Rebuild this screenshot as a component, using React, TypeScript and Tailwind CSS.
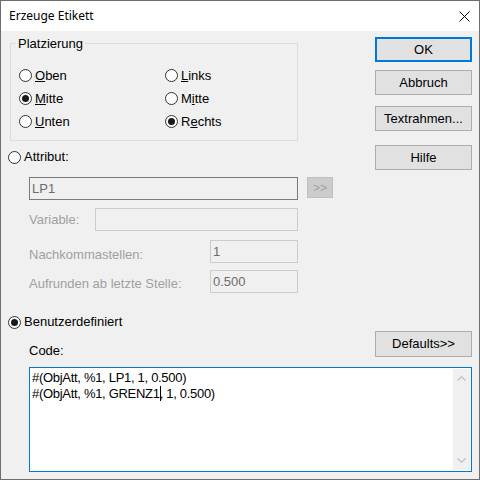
import React from "react";

function Radio({ checked }: { checked?: boolean }) {
  return (
    <span className="w-[13px] h-[13px] rounded-full border border-[#333333] bg-white flex items-center justify-center shrink-0">
      {checked && <span className="w-[7px] h-[7px] rounded-full bg-[#1a1a1a]" />}
    </span>
  );
}

function Option({ checked, children }: { checked?: boolean; children: React.ReactNode }) {
  return (
    <div className="h-[23px] flex items-center gap-[3px]">
      <Radio checked={checked} />
      <span className="leading-[16px]">{children}</span>
    </div>
  );
}

function Button({ children, focused, className = "" }: { children: React.ReactNode; focused?: boolean; className?: string }) {
  return (
    <div
      className={
        "w-[97px] h-[25px] bg-[#e1e1e1] flex items-center justify-center leading-[16px] " +
        (focused ? "border-2 border-[#0078d7] " : "border border-[#adadad] ") +
        className
      }
    >
      {children}
    </div>
  );
}

function Field({ value, className = "" }: { value?: string; className?: string }) {
  return (
    <div className={"h-[23px] bg-[#f0f0f0] border border-[#cccccc] flex items-center pl-[2px] text-[#6d6d6d] leading-[16px] " + className}>
      {value}
    </div>
  );
}

export default function App() {
  return (
    <div className="w-[480px] h-[480px] border border-[#6e6e6e] bg-[#f0f0f0] flex flex-col text-[13px] text-black font-['Liberation_Sans',Arial,sans-serif]">
      {/* title bar */}
      <div className="h-[30px] bg-white flex items-center justify-between pl-[8px] pr-[9px] shrink-0">
        <span className="text-[12px] font-['Noto_Sans',sans-serif] leading-[16px]">Erzeuge Etikett</span>
        <svg width="11" height="11" viewBox="0 0 11 11" className="shrink-0">
          <path d="M0.5 0.5 L10.5 10.5 M10.5 0.5 L0.5 10.5" stroke="#000" strokeWidth="1" />
        </svg>
      </div>

      <div className="flex-1 flex flex-col pl-[7px] pr-[7px]">
        <div className="flex justify-between">
          {/* left side */}
          <div className="w-[326px] flex flex-col">
            <div className="relative ml-[2px] mt-[12px] w-[288px] h-[98px] border border-[#dcdcdc] pt-[20px] pl-[8px]">
              <span className="absolute left-[5px] -top-[8px] px-[2px] bg-[#f0f0f0] leading-[16px]">Platzierung</span>
              <div className="grid grid-cols-[146px_1fr]">
                <Option><u>O</u>ben</Option>
                <Option><u>L</u>inks</Option>
                <Option checked><u>M</u>itte</Option>
                <Option>M<u>i</u>tte</Option>
                <Option><u>U</u>nten</Option>
                <Option checked>R<u>e</u>chts</Option>
              </div>
            </div>

            <div className="mt-[6px] h-[20px] flex items-center gap-[3px]">
              <Radio />
              <span className="leading-[16px]">Attribut:</span>
            </div>

            <div className="mt-[10px] flex items-start">
              <div className="ml-[21px] w-[269px] h-[23px] bg-[#f0f0f0] border border-[#7a7a7a] flex items-center pl-[2px] text-[#6d6d6d] leading-[16px]">
                LP1
              </div>
              <div className="ml-[9px] w-[26px] h-[21px] bg-[#cccccc] border border-[#bfbfbf] flex items-center justify-center text-[#a0a0a0] text-[12px] leading-[14px]">
                &gt;&gt;
              </div>
            </div>

            <div className="mt-[8px] w-[290px] flex items-center pl-[21px]">
              <span className="text-[#a0a0a0] leading-[16px]">Variable:</span>
              <Field className="ml-auto w-[203px]" />
            </div>

            <div className="mt-[9px] w-[290px] flex items-start pl-[21px]">
              <span className="text-[#a0a0a0] leading-[16px] pt-[7px]">Nachkommastellen:</span>
              <Field value="1" className="ml-auto w-[88px]" />
            </div>

            <div className="mt-[7px] w-[290px] flex items-start pl-[21px]">
              <span className="text-[#a0a0a0] leading-[16px] pt-[6px]">Aufrunden ab letzte Stelle:</span>
              <Field value="0.500" className="ml-auto w-[88px]" />
            </div>
          </div>

          {/* right-hand buttons */}
          <div className="flex flex-col pt-[6px]">
            <Button focused>OK</Button>
            <Button className="mt-[8px]">Abbruch</Button>
            <Button className="mt-[11px]">Textrahmen...</Button>
            <Button className="mt-[14px]">Hilfe</Button>
          </div>
        </div>

        {/* custom code section */}
        <div className="mt-[20px] h-[18px] flex items-center gap-[3px]">
          <Radio checked />
          <span className="leading-[16px]">Benutzerdefiniert</span>
        </div>

        <div className="flex justify-between items-start">
          <span className="ml-[21px] mt-[12px] leading-[16px]">Code:</span>
          <Button className="h-[26px]">Defaults&gt;&gt;</Button>
        </div>

        <div className="mt-[8px] ml-[21px] h-[105px] border border-[#0078d7] bg-white flex">
          <div className="flex-1 pl-[2px] pt-[2px] leading-[16px] whitespace-pre tracking-[-0.3px]">
            <div>#(ObjAtt, %1, LP1, 1, 0.500)</div>
            <div>
              #(ObjAtt, %1, GRENZ1<span className="inline-block w-[1px] h-[15px] bg-black align-[-3px] -mr-[1px]" />, 1, 0.500)
            </div>
          </div>
          <div className="p-[1px] flex">
            <div className="w-[17px] bg-[#f0f0f0] flex flex-col items-center justify-between py-[7px]">
              <svg width="9" height="5" viewBox="0 0 9 5">
                <path d="M0.5 4.5 L4.5 0.8 L8.5 4.5" fill="none" stroke="#c2c2c2" strokeWidth="1.4" />
              </svg>
              <svg width="9" height="5" viewBox="0 0 9 5">
                <path d="M0.5 0.5 L4.5 4.2 L8.5 0.5" fill="none" stroke="#c2c2c2" strokeWidth="1.4" />
              </svg>
            </div>
          </div>
        </div>
      </div>
    </div>
  );
}
